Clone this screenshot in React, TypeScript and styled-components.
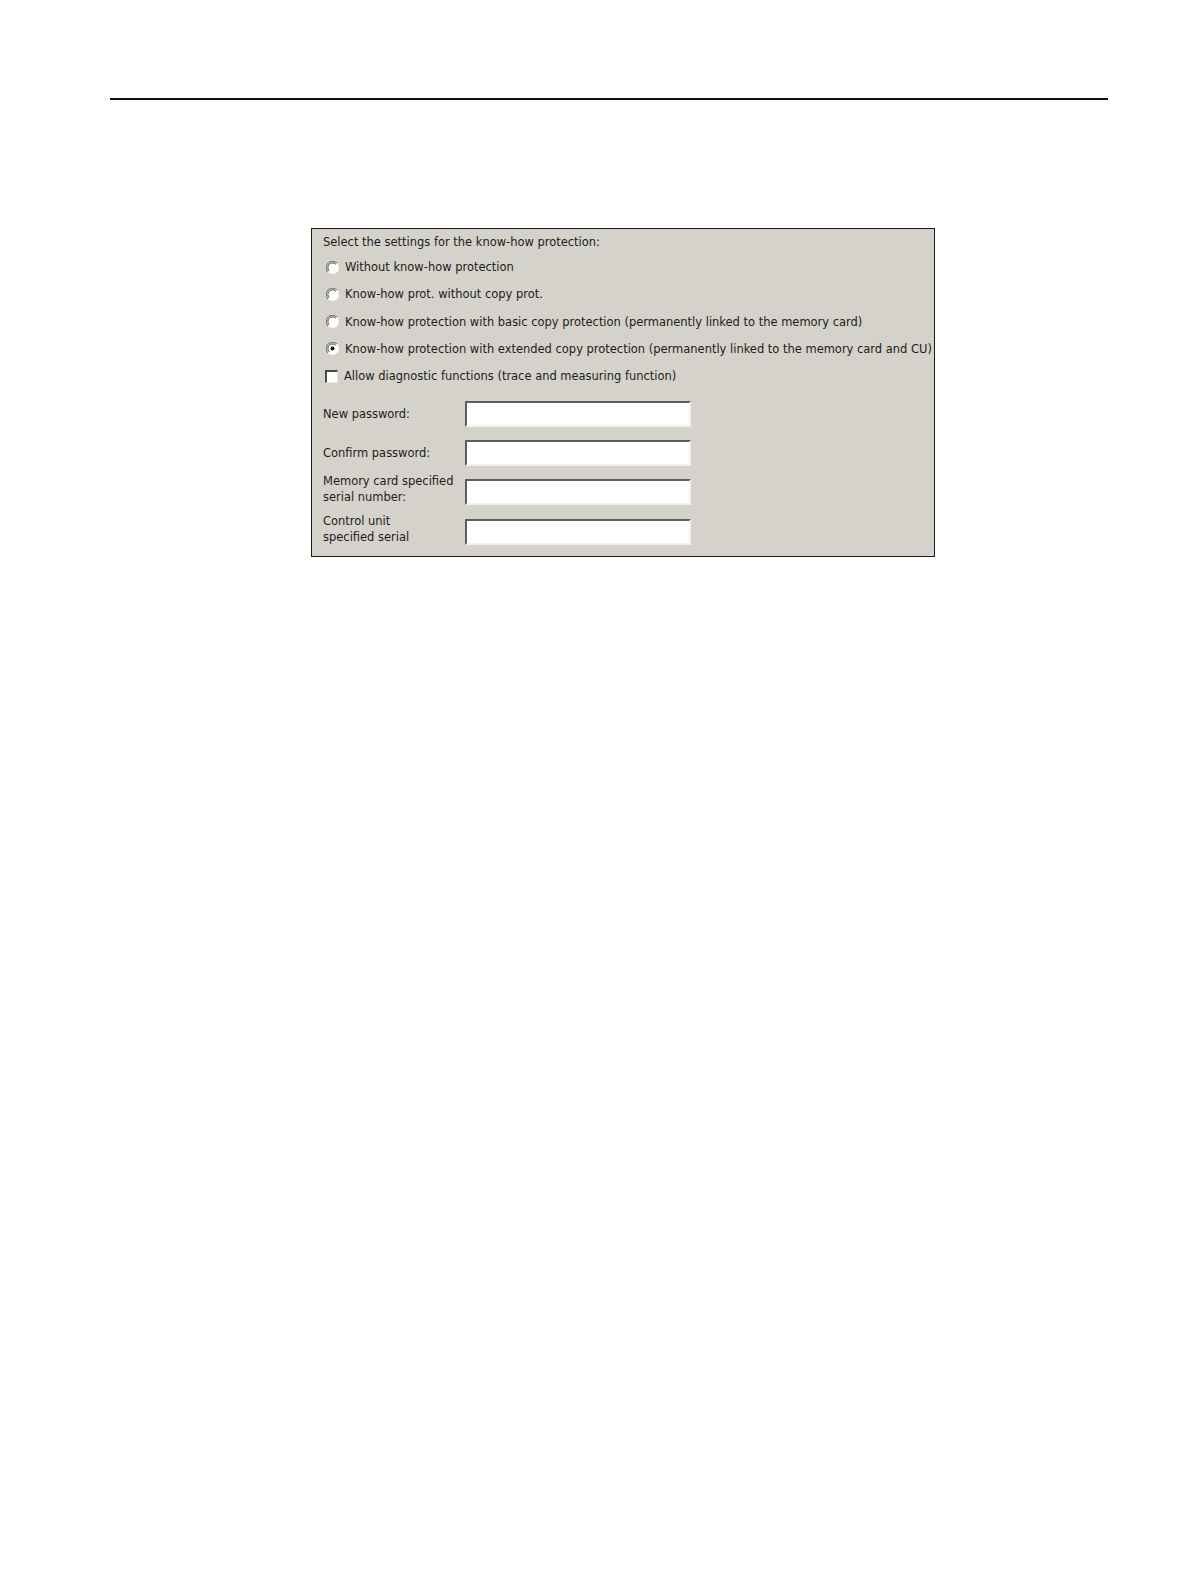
import React from "react";
import styled, { createGlobalStyle } from "styled-components";

const GlobalStyle = createGlobalStyle`
  html, body {
    margin: 0;
    padding: 0;
    background: #ffffff;
  }
`;

const Page = styled.div`
  padding-top: 98px;
  padding-bottom: 200px;
`;

const Rule = styled.div`
  margin-left: 110px;
  width: 998px;
  height: 2px;
  background: #111111;
`;

const Panel = styled.div`
  margin: 128px 0 0 311px;
  width: 624px;
  height: 329px;
  box-sizing: border-box;
  border: 1px solid #1a1a1a;
  background: #d5d2cb;
  overflow: hidden;
  padding: 5px 0 0 11px;
  font-family: "DejaVu Sans Condensed", "DejaVu Sans", sans-serif;
  font-size: 12.75px;
  color: #1c1c1c;
  white-space: nowrap;
`;

const Heading = styled.div`
  height: 16px;
  line-height: 16px;
  margin-bottom: 9px;
`;

const OptionRow = styled.div`
  display: flex;
  align-items: center;
  gap: 6px;
  height: 16px;
  line-height: 16px;
  margin-bottom: 11.3px;
  padding-left: 3px;
`;

const RadioMark = ({ checked }: { checked?: boolean }) => (
  <svg width="13" height="13" viewBox="0 0 13 13">
    <circle cx="6.5" cy="6.5" r="6" fill="#ffffff" />
    <path d="M11 2.2 A6 6 0 0 0 2 11" stroke="#7a7a7a" strokeWidth="1.1" fill="none" />
    <path d="M9.8 3.2 A4.6 4.6 0 0 0 3.2 9.8" stroke="#3c3c3c" strokeWidth="1" fill="none" />
    <path d="M2 11 A6 6 0 0 0 11 2.2" stroke="#f4f3ef" strokeWidth="1" fill="none" />
    {checked && <circle cx="6.5" cy="6.5" r="2" fill="#111111" />}
  </svg>
);

const CheckBox = styled.span`
  display: inline-block;
  width: 13px;
  height: 13px;
  box-sizing: border-box;
  background: #ffffff;
  border-top: 2px solid #4a4a4a;
  border-left: 2px solid #4a4a4a;
  border-right: 1px solid #e8e6e0;
  border-bottom: 1px solid #e8e6e0;
  margin-left: -1px;
`;

const Form = styled.div`
  display: grid;
  grid-template-columns: 142px 226px;
  row-gap: 13.3px;
  margin-top: 16.5px;
`;

const FieldLabel = styled.div<{ $multi?: boolean }>`
  line-height: 16px;
  white-space: normal;
  overflow: hidden;
  align-self: ${(p) => (p.$multi ? "start" : "center")};
  margin-top: ${(p) => (p.$multi ? "-6.3px" : "0")};
  height: ${(p) => (p.$multi ? "33px" : "auto")};
`;

const Field = styled.div`
  height: 26px;
  box-sizing: border-box;
  background: #ffffff;
  border-top: 2px solid #5e5e5e;
  border-left: 2px solid #5e5e5e;
  border-right: 2px solid #f2f1ec;
  border-bottom: 2px solid #f2f1ec;
`;

const options = [
  { text: "Without know-how protection" },
  { text: "Know-how prot. without copy prot." },
  { text: "Know-how protection with basic copy protection (permanently linked to the memory card)" },
  {
    text: "Know-how protection with extended copy protection (permanently linked to the memory card and CU)",
    checked: true,
  },
];

const fields = [
  ["New password:"],
  ["Confirm password:"],
  ["Memory card specified", "serial number:"],
  ["Control unit", "specified serial", "number:"],
];

export default function App() {
  return (
    <Page>
      <GlobalStyle />
      <Rule />
      <Panel>
        <Heading>Select the settings for the know-how protection:</Heading>
        {options.map((o) => (
          <OptionRow key={o.text}>
            <RadioMark checked={o.checked} />
            <span>{o.text}</span>
          </OptionRow>
        ))}
        <OptionRow>
          <CheckBox />
          <span>Allow diagnostic functions (trace and measuring function)</span>
        </OptionRow>
        <Form>
          {fields.map((lines) => (
            <React.Fragment key={lines.join(" ")}>
              <FieldLabel $multi={lines.length > 1}>
                {lines.map((l) => (
                  <div key={l}>{l}</div>
                ))}
              </FieldLabel>
              <Field />
            </React.Fragment>
          ))}
        </Form>
      </Panel>
    </Page>
  );
}
